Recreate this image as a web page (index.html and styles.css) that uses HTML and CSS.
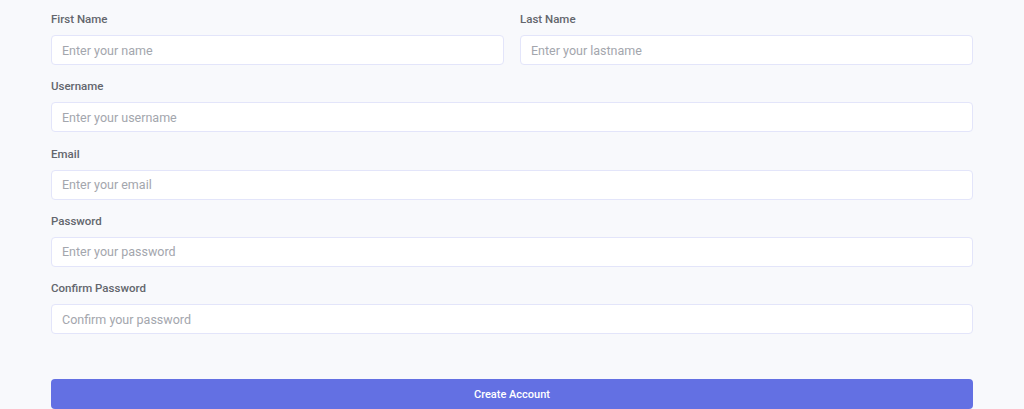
FILE: index.html
```html
<!DOCTYPE html>
<html lang="en">
<head>
<meta charset="utf-8">
<title>Create Account</title>
<link rel="stylesheet" href="styles.css">
</head>
<body>
<form class="signup">
  <div class="row two">
    <div class="field">
      <label class="label" for="first">First Name</label>
      <input class="input" id="first" type="text" placeholder="Enter your name">
    </div>
    <div class="field">
      <label class="label" for="last">Last Name</label>
      <input class="input" id="last" type="text" placeholder="Enter your lastname">
    </div>
  </div>
  <div class="field">
    <label class="label" for="user">Username</label>
    <input class="input" id="user" type="text" placeholder="Enter your username">
  </div>
  <div class="field">
    <label class="label" for="email">Email</label>
    <input class="input" id="email" type="email" placeholder="Enter your email">
  </div>
  <div class="field">
    <label class="label" for="pass">Password</label>
    <input class="input" id="pass" type="password" placeholder="Enter your password">
  </div>
  <div class="field">
    <label class="label" for="confirm">Confirm Password</label>
    <input class="input" id="confirm" type="password" placeholder="Confirm your password">
  </div>
  <button class="submit" type="submit">Create Account</button>
</form>
</body>
</html>
```
FILE: styles.css
```css
* { box-sizing: border-box; }

html, body {
  margin: 0;
  background: #f8f9fc;
  font-family: Roboto, "Noto Sans", sans-serif;
}

.signup {
  width: 922px;
  margin: 0 auto;
  padding-top: 10px;
  display: flex;
  flex-direction: column;
  gap: 12.25px;
}

.row.two {
  display: grid;
  grid-template-columns: 1fr 1fr;
  gap: 16px;
}

.field {
  display: flex;
  flex-direction: column;
}

.label {
  font-size: 11.5px;
  line-height: 18px;
  font-weight: 500;
  color: #63666d;
  margin-bottom: 7px;
}

.input {
  height: 30px;
  padding: 0 10px;
  border: 1px solid #e3e5fa;
  border-radius: 4px;
  background: #ffffff;
  font-family: inherit;
  font-size: 12.5px;
  color: #374151;
  outline: none;
}

.input::placeholder {
  color: #a3a6ad;
}

.submit {
  margin-top: 33px;
  height: 30px;
  border: none;
  border-radius: 4px;
  background: #6370e3;
  color: #ffffff;
  font-family: inherit;
  font-size: 11px;
  font-weight: 500;
  cursor: pointer;
}
```
